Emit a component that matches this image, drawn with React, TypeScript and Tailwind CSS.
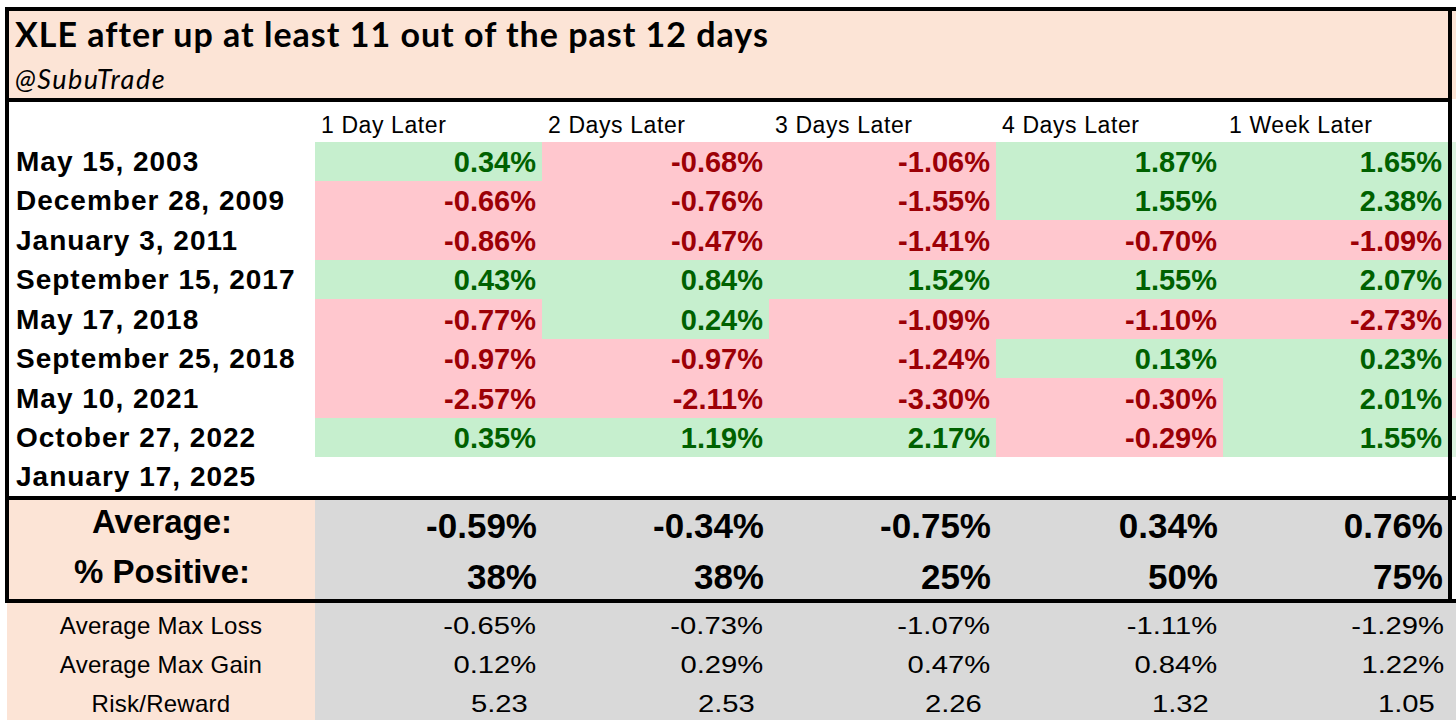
import React from "react";

type Row = { date: string; vals: number[] | null };

const rows: Row[] = [
  { date: "May 15, 2003", vals: [0.34, -0.68, -1.06, 1.87, 1.65] },
  { date: "December 28, 2009", vals: [-0.66, -0.76, -1.55, 1.55, 2.38] },
  { date: "January 3, 2011", vals: [-0.86, -0.47, -1.41, -0.7, -1.09] },
  { date: "September 15, 2017", vals: [0.43, 0.84, 1.52, 1.55, 2.07] },
  { date: "May 17, 2018", vals: [-0.77, 0.24, -1.09, -1.1, -2.73] },
  { date: "September 25, 2018", vals: [-0.97, -0.97, -1.24, 0.13, 0.23] },
  { date: "May 10, 2021", vals: [-2.57, -2.11, -3.3, -0.3, 2.01] },
  { date: "October 27, 2022", vals: [0.35, 1.19, 2.17, -0.29, 1.55] },
  { date: "January 17, 2025", vals: null },
];

const rowHeights = ["h-[39px]", "h-[39px]", "h-[40px]", "h-[39px]", "h-[40px]", "h-[39px]", "h-[40px]", "h-[39px]", "h-[39px]"];
const stripColors = [
  "bg-[#dcf3e0]",
  "bg-[#dcf3e0]",
  "bg-[#dcf3e0]",
  "bg-[#dcf3e0]",
  "bg-[#fcd9dd]",
  "bg-[#dcf3e0]",
  "bg-[#fcd9dd]",
  "bg-[#dcf3e0]",
  "bg-white",
];

const headers = ["1 Day Later", "2 Days Later", "3 Days Later", "4 Days Later", "1 Week Later"];
const avg = ["-0.59%", "-0.34%", "-0.75%", "0.34%", "0.76%"];
const pos = ["38%", "38%", "25%", "50%", "75%"];
const maxLoss = ["-0.65%", "-0.73%", "-1.07%", "-1.11%", "-1.29%"];
const maxGain = ["0.12%", "0.29%", "0.47%", "0.84%", "1.22%"];
const rr = ["5.23", "2.53", "2.26", "1.32", "1.05"];

const ARIAL = "font-['Liberation_Sans',Arial,sans-serif]";
const CAL = "font-['Lato','Carlito',sans-serif]";
const GRID = "grid grid-cols-[306px_227px_227px_227px_227px_225px]";

function fmt(v: number) {
  return v.toFixed(2) + "%";
}

export default function App() {
  return (
    <div className={`w-[1456px] h-[722px] bg-white overflow-hidden pt-[7px] leading-none ${ARIAL} text-black`}>
      {/* top rule */}
      <div className="ml-[5px] h-[4px] bg-black" />
      <div className="flex">
        <div className="ml-[5px] w-[1447px] shrink-0 border-x-[4px] border-black">
          {/* Title */}
          <div className={`h-[87px] bg-[#FCE4D6] pl-[6px] pt-[3px] ${CAL}`}>
            <div className="text-[34px] leading-[40px] font-bold tracking-[1px] whitespace-nowrap">
              XLE after up at least 11 out of the past 12 days
            </div>
            <div className="text-[27px] leading-[32px] italic tracking-[1.5px] mt-[9px]">@SubuTrade</div>
          </div>
          <div className="h-[4px] bg-black" />
          {/* Header */}
          <div className={`${GRID} h-[40px]`}>
            <div />
            {headers.map((h) => (
              <div key={h} className="flex items-end pb-[5px] pl-[6px] text-[23px] leading-none tracking-[0.6px] whitespace-nowrap">
                {h}
              </div>
            ))}
          </div>
          {/* Data rows */}
          {rows.map((r, i) => (
            <div key={r.date} className={`${GRID} ${rowHeights[i]}`}>
              <div className="flex items-center pt-[1px] pl-[7px] text-[28px] leading-none font-bold tracking-[1px] whitespace-nowrap">
                {r.date}
              </div>
              {r.vals
                ? r.vals.map((v, j) => (
                    <div
                      key={j}
                      className={`flex items-center justify-end pt-[2px] pr-[6px] text-[29px] leading-none font-bold ${
                        v >= 0 ? "bg-[#C6EFCE] text-[#006100]" : "bg-[#FFC7CE] text-[#9C0006]"
                      }`}
                    >
                      {fmt(v)}
                    </div>
                  ))
                : null}
            </div>
          ))}
        </div>
        {/* right overflow strip */}
        <div className="flex-1 flex flex-col">
          <div className="h-[88px] bg-[#FCE4D6]" />
          <div className="h-[43px] bg-white" />
          {rowHeights.map((h, i) => (
            <div key={i} className={`${h} ${stripColors[i]}`} />
          ))}
        </div>
      </div>
      {/* summary rule */}
      <div className="ml-[5px] h-[4px] bg-black" />
      <div className="flex">
        <div className="ml-[5px] w-[1447px] shrink-0 border-x-[4px] border-black">
          <div className={`${GRID} h-[50px]`}>
            <div className="bg-[#FCE4D6] flex items-center justify-center pb-[7px] text-[33px] leading-none font-bold">
              Average:
            </div>
            {avg.map((a, j) => (
              <div key={j} className="bg-[#D9D9D9] flex items-center justify-end pr-[5px] text-[35px] leading-none font-bold">
                {a}
              </div>
            ))}
          </div>
          <div className={`${GRID} h-[49px]`}>
            <div className="bg-[#FCE4D6] flex items-center justify-center pb-[6px] text-[33px] leading-none font-bold">
              % Positive:
            </div>
            {pos.map((a, j) => (
              <div key={j} className="bg-[#D9D9D9] flex items-center justify-end pt-[3px] pr-[5px] text-[35px] leading-none font-bold">
                {a}
              </div>
            ))}
          </div>
        </div>
        <div className="flex-1 bg-white" />
      </div>
      {/* bottom rule */}
      <div className="ml-[5px] h-[4px] bg-black" />
      {/* bottom stats */}
      <div className="ml-[7px]">
        {[
          { label: "Average Max Loss", vals: maxLoss, pr: "pr-[6px]", last: "pr-[12px]" },
          { label: "Average Max Gain", vals: maxGain, pr: "pr-[6px]", last: "pr-[12px]" },
          { label: "Risk/Reward", vals: rr, pr: "pr-[14px]", last: "pr-[21px]" },
        ].map((r) => (
          <div key={r.label} className="grid grid-cols-[308px_227px_227px_227px_227px_233px] h-[39px]">
            <div className="bg-[#FCE4D6] flex items-center justify-center pt-[7px] text-[24px] leading-none tracking-[0.25px]">
              {r.label}
            </div>
            {r.vals.map((v, j) => (
              <div key={j} className={`bg-[#D9D9D9] flex items-center justify-end pt-[7px] ${j === 4 ? r.last : r.pr}`}>
                <span className="text-[23px] leading-none inline-block scale-x-[1.27] origin-right">{v}</span>
              </div>
            ))}
          </div>
        ))}
      </div>
    </div>
  );
}
